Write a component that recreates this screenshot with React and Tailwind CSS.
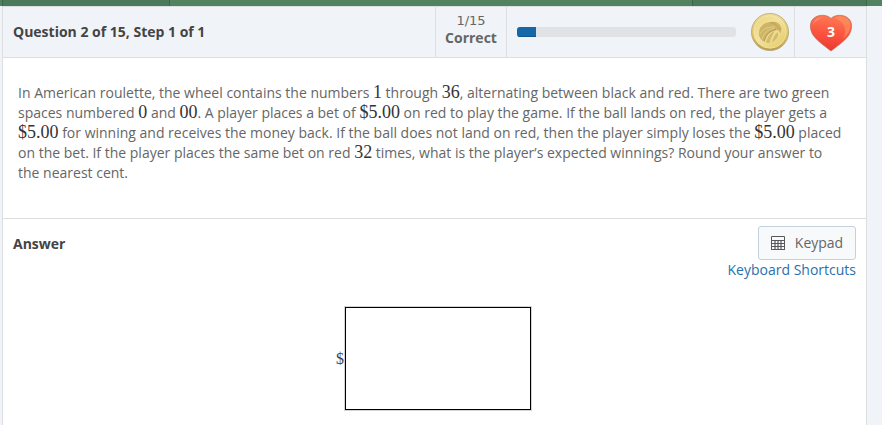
import React from "react";

function Num({ children }) {
  return (
    <span className="font-['Liberation_Serif',serif] text-lg leading-none text-[#333]">
      {children}
    </span>
  );
}

function Coin() {
  return (
    <svg width="40" height="40" viewBox="0 0 40 40" role="img" aria-label="Coin">
      <defs>
        <linearGradient id="coinRim" x1="0" y1="0" x2="0" y2="1">
          <stop offset="0" stopColor="#f0dd96" />
          <stop offset="0.6" stopColor="#dcc05f" />
          <stop offset="1" stopColor="#b99a4c" />
        </linearGradient>
        <linearGradient id="coinFace" x1="0" y1="0" x2="1" y2="1">
          <stop offset="0" stopColor="#ecd47c" />
          <stop offset="0.45" stopColor="#f3e29e" />
          <stop offset="1" stopColor="#e4c968" />
        </linearGradient>
      </defs>
      <circle cx="20" cy="20" r="18.6" fill="url(#coinRim)" stroke="#b5a77c" strokeWidth="0.8" />
      <circle cx="20" cy="20" r="16.3" fill="url(#coinFace)" stroke="#f7eab3" strokeWidth="0.6" />
      <path
        d="M9 23C8 15 14 10 21 10C26 9 31 11 31.500 17.500L30.500 21.500C29.500 19 28 18 26 18C22 19 16 22 14.500 30C11.500 28.500 9.500 26 9 23Z"
        fill="#cdb466"
      />
      <path
        d="M10 22C13 17 18 14.500 25 15M12 27C14 21 18 17.500 24 16.500"
        fill="none"
        stroke="#e3ce84"
        strokeWidth="1"
      />
      <path d="M20 10.500C24 11 27 12.500 28 15.500L31 17" fill="none" stroke="#b79f57" strokeWidth="0.9" />
      <path
        d="M16 30.500C17 25 20 21 25 19C22.500 23 20.500 26 19.500 31C18 31 17 31 16 30.500ZM22 30.500C23 26 25 22.500 27.500 20C29 23 27.500 27 22 30.500Z"
        fill="#d3bb6c"
      />
      <path d="M14.500 29C15.500 23 19.500 18.500 26 17.500" fill="none" stroke="#b39a50" strokeWidth="1" />
    </svg>
  );
}

function Heart() {
  return (
    <svg width="44" height="38" viewBox="0 0 44 38" role="img" aria-label="3 lives">
      <defs>
        <linearGradient id="heartFill" x1="0.6" y1="0" x2="0.45" y2="1">
          <stop offset="0" stopColor="#ff7b55" />
          <stop offset="0.5" stopColor="#fb5540" />
          <stop offset="1" stopColor="#ee3830" />
        </linearGradient>
      </defs>
      <path
        d="M22 37C16 32 9 28 4 21C0.500 15 0.500 8 4.500 4.500C9.500 0 18 0.500 22 4.500C26 0.500 34.500 0 39.500 4.500C43.500 8 43.500 15 40 21C35 28 28 32 22 37Z"
        fill="url(#heartFill)"
        stroke="#b9685c"
        strokeWidth="0.700"
      />
      <path
        d="M25 4C29 1.500 35 1.500 38.500 5C42 8.500 42 14 39.500 18.500C38 21 36 23 34 24.500C38 17 37 8 25 4Z"
        fill="#ff9562"
        opacity="0.600"
      />
      <path
        d="M4 11C4.500 6 9 3 14 3.500C10 4.500 6 7 4 11Z"
        fill="#ffa085"
        opacity="0.700"
      />
      <text
        x="22"
        y="23"
        textAnchor="middle"
        fill="white"
        className="font-['Open_Sans',sans-serif] text-sm font-bold"
      >
        3
      </text>
    </svg>
  );
}

function KeypadIcon() {
  return (
    <svg width="14" height="14" viewBox="0 0 14 14" fill="none" stroke="#55595e" aria-hidden="true">
      <path d="M0.500 0.500H13.500V13.500H0.500Z" />
      <path d="M0 4.500H14M0 13.500H14" />
      <path d="M1 7.500H13M1 10.500H13M4 5V13M7 5V13M10 5V13" strokeWidth="1.200" />
    </svg>
  );
}

export default function App() {
  return (
    <div className="flex min-h-screen flex-col bg-[#f0f4f8] font-['Open_Sans','Noto_Sans',sans-serif] text-sm leading-5 text-[#666]">
      <div className="flex h-1.5 bg-[#52825f]">
        <div className="w-[3px] border-r border-[#3d6548]" />
        <div className="w-[167px] border-r border-[#3d6548] bg-[#4c7959]" />
        <div className="grow" />
        <div className="w-[175px] border-x border-[#3d6548] bg-[#4c7959]" />
        <div className="w-[15px]" />
      </div>

      <main className="mr-[15px] ml-0.5 flex grow flex-col border border-b-0 border-[#dcdee0] bg-white">
        <header className="flex h-[51px] border-b border-[#dcdee0] bg-[#f0f4f8]">
          <h1 className="flex grow items-center pl-2.5 font-bold text-[#444]">
            Question 2 of 15, Step 1 of 1
          </h1>
          <div className="w-[72px] border-x border-[#dcdee0] pt-[5px] text-center">
            <div className="font-['DejaVu_Sans',sans-serif] text-[13px] leading-[18px]">1/15</div>
            <div className="leading-4 font-bold">Correct</div>
          </div>
          <div className="flex w-[287px] items-center gap-3.5 pl-2.5">
            <div
              role="progressbar"
              aria-label="Questions correct"
              aria-valuenow={1}
              aria-valuemin={0}
              aria-valuemax={15}
              className="h-2.5 w-[219px] overflow-hidden rounded-[3px] bg-[#e1e2e6]"
            >
              <div className="h-full w-[19px] border-b border-[#0e5591] bg-[#1567a8]" />
            </div>
            <Coin />
          </div>
          <div className="flex w-[72px] items-center justify-center border-l border-[#dcdee0] pt-0.5">
            <Heart />
          </div>
        </header>

        <section className="h-[161px] border-b border-[#dcdee0] px-[15px] pt-[25px]">
          <p className="max-w-[826px]">
            In American roulette, the wheel contains the numbers <Num>1</Num> through <Num>36</Num>,
            alternating between black and red. There are two green spaces numbered <Num>0</Num> and{" "}
            <Num>00</Num>. A player places a bet of <Num>$5.00</Num> on red to play the game. If the
            ball lands on red, the player gets a <Num>$5.00</Num> for winning and receives the money
            back. If the ball does not land on red, then the player simply loses the{" "}
            <Num>$5.00</Num> placed on the bet. If the player places the same bet on red{" "}
            <Num>32</Num> times, what is the player’s expected winnings? Round your answer to the
            nearest cent.
          </p>
        </section>

        <section>
          <div className="flex justify-between px-2.5 pt-[7px]">
            <h2 className="pt-2 font-bold text-[#444]">Answer</h2>
            <div className="flex flex-col items-end">
              <button
                type="button"
                className="flex h-[34px] w-[98px] items-center justify-center gap-2.5 rounded-[3px] border border-[#c3d2de] bg-[#f7f9fb]"
              >
                <KeypadIcon />
                Keypad
              </button>
              <a href="#shortcuts" className="text-[#2a70ae]">
                Keyboard Shortcuts
              </a>
            </div>
          </div>
          <div className="flex items-center justify-center gap-px pt-[27px] pr-0.5">
            <label htmlFor="answer" className="font-['Liberation_Serif',serif] text-base leading-5 text-[#444]">
              $
            </label>
            <input
              id="answer"
              type="text"
              className="h-[103px] w-[186px] border border-black bg-white px-2 ring-1 ring-[#d4d4d4] outline-none"
            />
          </div>
        </section>
      </main>
    </div>
  );
}
